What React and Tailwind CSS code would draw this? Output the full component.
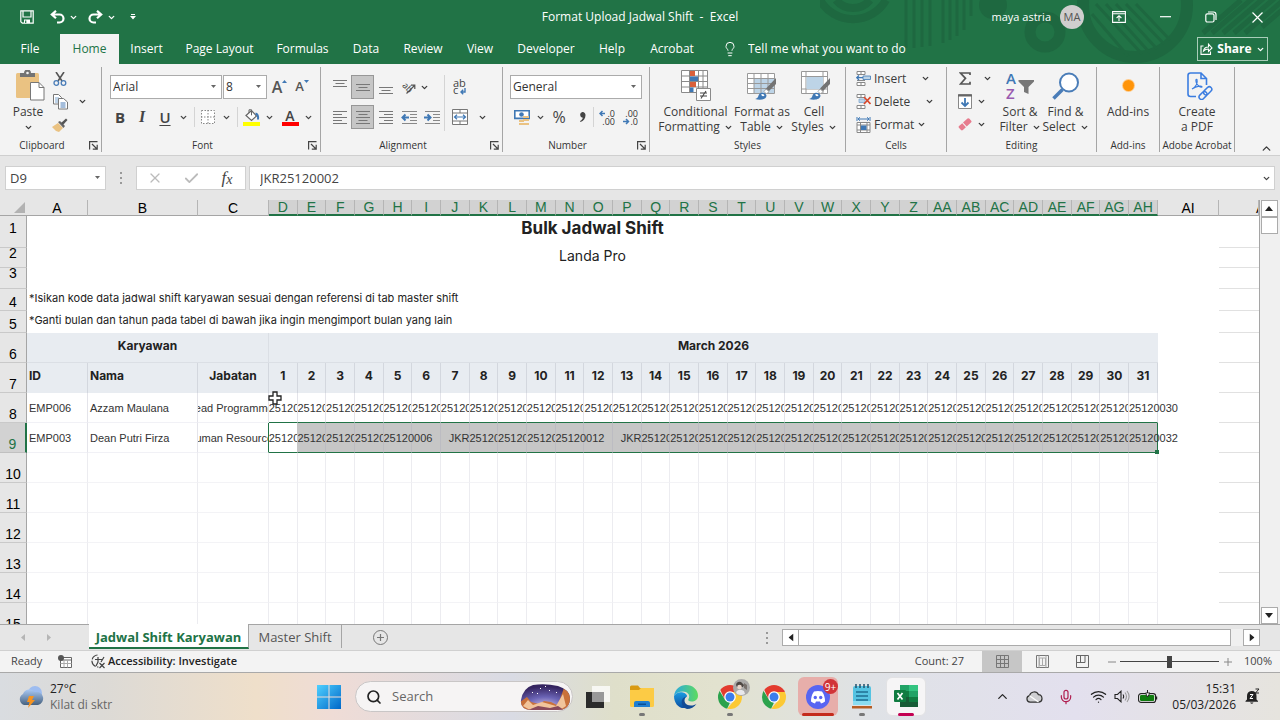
import { ChevronDown, ChevronUp, Lightbulb, Mic, Search, Wifi, X, Check } from "lucide-react";

const TABS = [
  ["File", "w-[60px]"],
  ["Home", "w-[59px]"],
  ["Insert", "w-[55px]"],
  ["Page Layout", "w-[91px]"],
  ["Formulas", "w-[75px]"],
  ["Data", "w-[52px]"],
  ["Review", "w-[62px]"],
  ["View", "w-[52px]"],
  ["Developer", "w-[80px]"],
  ["Help", "w-[52px]"],
  ["Acrobat", "w-[68px]"],
];

const DAYS = Array.from({ length: 31 }, (_, i) => i + 1);

const columnName = (n) =>
  n < 26
    ? String.fromCharCode(65 + n)
    : "A" + String.fromCharCode(65 + n - 26);

const code = (n) => "JKR2512" + String(n).padStart(4, "0");

const EMPLOYEES = [
  {
    row: 8,
    id: "EMP006",
    name: "Azzam Maulana",
    job: "Lead Programmer",
    shifts: DAYS.map((d) => code(d === 1 ? 1 : d - 1)),
  },
  {
    row: 9,
    id: "EMP003",
    name: "Dean Putri Firza",
    job: "Human Resources",
    shifts: DAYS.map((d) => ([6, 7, 12, 13].includes(d) ? "" : code(d + 1))),
  },
];

export default function App() {
  return (
    <div className="flex h-screen w-full flex-col overflow-hidden bg-[#e6e6e6] font-['Open_Sans',sans-serif] text-xs text-[#333]">
      <Header />
      <Ribbon />
      <FormulaBar />
      <Sheet />
      <SheetTabs />
      <StatusBar />
      <Taskbar />
    </div>
  );
}

/* ---------- shared ---------- */

function Chev({ className = "" }) {
  return (
    <ChevronDown
      size={9}
      strokeWidth={3.5}
      className={`shrink-0 ${className}`}
      aria-hidden="true"
    />
  );
}

function IconButton({ label, height = "h-6", className = "", children }) {
  return (
    <button
      type="button"
      aria-label={label}
      className={`${height} flex shrink-0 items-center justify-center ${className}`}
    >
      {children}
    </button>
  );
}

/* ---------- header ---------- */

function Header() {
  return (
    <header className="relative shrink-0 bg-[#217346] text-white">
      <HeaderArt />
      <div className="relative grid h-[34px] grid-cols-[1fr_auto_1fr] items-center">
        <div className="flex items-center pl-[15px]">
          <IconButton label="Save" className="w-6">
            <svg width="14" height="14" viewBox="0 0 14 14" fill="none" stroke="#fff" strokeWidth="1.2">
              <path d="M.8.8h12.4v12.4H2.300L.8 11.700z" />
              <path d="M3 1v6h8V1" />
              <path d="M4 13V9.500h6V13z" fill="#fff" stroke="none" />
              <path d="M5.700 10.500V13" stroke="#217346" />
            </svg>
          </IconButton>
          <IconButton label="Undo" className="ml-1.5 w-6">
            <UndoIcon />
          </IconButton>
          <IconButton label="Undo history" className="w-2">
            <Chev />
          </IconButton>
          <IconButton label="Redo" className="ml-1.5 w-6">
            <UndoIcon className="-scale-x-100" />
          </IconButton>
          <IconButton label="Redo history" className="w-2">
            <Chev />
          </IconButton>
          <IconButton label="Customize toolbar" className="ml-3 w-3">
            <svg width="6" height="6" viewBox="0 0 6 6" fill="#fff">
              <path d="M1 0h4v1H1zM0 2h6L3 5.5z" />
            </svg>
          </IconButton>
        </div>
        <h1 className="whitespace-pre">Format Upload Jadwal Shift  -  Excel</h1>
        <div className="flex items-center justify-end">
          <span className="mr-[9px] text-[11px]">maya astria</span>
          <span className="mr-3 flex size-6 items-center justify-center rounded-full bg-[#d0cece] text-[11px] text-[#555]">
            MA
          </span>
          <IconButton label="Ribbon display options" className="w-[46px]">
            <svg width="14" height="12" viewBox="0 0 14 12" fill="none" stroke="#fff" strokeWidth="1.1">
              <path d="M.6.6h12.8v10.8H.6zM.6 2.8h12.8M7 10V5M4.6 7 7 4.7 9.4 7" />
            </svg>
          </IconButton>
          <IconButton label="Minimize" className="w-[46px]">
            <svg width="11" height="2" viewBox="0 0 11 2">
              <path d="M0 .7h11" stroke="#fff" strokeWidth="1.2" />
            </svg>
          </IconButton>
          <IconButton label="Restore" className="w-[46px]">
            <svg width="12" height="12" viewBox="0 0 12 12" fill="none" stroke="#fff" strokeWidth="1.2">
              <rect x=".8" y="2.8" width="8.2" height="8.2" rx="1.5" />
              <path d="M3 1h5.5A2.6 2.6 0 0 1 11 3.5V9" />
            </svg>
          </IconButton>
          <IconButton label="Close" className="w-[46px]">
            <svg width="11" height="11" viewBox="0 0 11 11">
              <path d="m.5.5 10 10m0-10-10 10" stroke="#fff" strokeWidth="1.2" />
            </svg>
          </IconButton>
        </div>
      </div>
      <nav className="relative flex h-[30px] items-stretch">
        {TABS.map(([name, width]) => (
          <button
            key={name}
            type="button"
            className={`${width} shrink-0 whitespace-nowrap ${
              name === "Home" ? "bg-[#f3f3f3] text-[#217346]" : ""
            }`}
          >
            {name}
          </button>
        ))}
        <label htmlFor="tellme" className="flex w-8 items-center justify-end">
          <Lightbulb size={16} strokeWidth={1.5} aria-label="Tell me" />
        </label>
        <input
          id="tellme"
          className="w-44 bg-transparent pl-2.5 placeholder:text-white placeholder:opacity-100"
          placeholder="Tell me what you want to do"
        />
        <button
          type="button"
          className="mr-3 ml-auto flex h-6 w-[71px] items-center justify-center gap-1 self-center border border-[#a9cdb9] font-bold"
        >
          <svg width="13" height="12" viewBox="0 0 13 12" fill="none" stroke="#fff" strokeWidth="1.1">
            <path d="M3.5 3H1v8.4h9.5V8.5M3.5 8C4 5 6 4 8.5 4V1.2L12 5 8.5 8.5V6C6.500 6 5 6.500 3.500 8z" />
          </svg>
          Share
          <Chev />
        </button>
      </nav>
    </header>
  );
}

function UndoIcon({ className = "" }) {
  return (
    <svg width="15" height="14" viewBox="0 0 15 14" fill="none" stroke="#fff" strokeWidth="2.2" className={className}>
      <path d="M6 .8 1.800 4.500 6 8.300M2 4.500h7.500a4 4 0 0 1 0 8H7" />
    </svg>
  );
}

function HeaderArt() {
  return (
    <svg
      className="absolute top-0 right-0"
      width="460"
      height="64"
      viewBox="820 0 460 64"
      fill="none"
      stroke="#1e6840"
      aria-hidden="true"
    >
      <path d="M820 0a38 38 0 0 0 66 0M836 0a22 22 0 0 0 34 0" strokeWidth="8" />
      <path d="M906 0v48M914 0v48M922 0v47M930 0v46M943 0v43M950 0v40M957 0v36M964 0v30M971 0v16" strokeWidth="3" />
      <circle cx="993" cy="5" r="14" fill="#1e6840" stroke="none" />
      <circle cx="1045" cy="32" r="15" strokeWidth="11" />
      <circle cx="1135" cy="5" r="52" strokeWidth="12" />
      <path d="m1096 4 46 50M1106 4l44 49M1116 4l41 45M1126 4l38 40M1136 4l34 36M1092 14l36 42" strokeWidth="3" />
      <path d="m1203 33 38-33M1212 33l42-36M1223 33l42-36M1234 33l42-36M1245 33l42-36M1262 27l20-17" strokeWidth="5" />
    </svg>
  );
}

/* ---------- ribbon ---------- */

function Group({ title, width, launcher, children }) {
  return (
    <section className={`${width} flex shrink-0 py-[3px]`} aria-label={title}>
      <div className="flex min-w-0 flex-1 flex-col border-r border-[#a5a5a5]">
        <div className="flex h-[73px]">{children}</div>
        <div
          className={`relative flex items-center justify-center text-[10px] leading-[14px] whitespace-nowrap text-[#333] ${
            launcher ? "pr-[17px]" : ""
          }`}
        >
          {title}
          {launcher && (
            <button type="button" aria-label={`${title} settings`} className="absolute top-[3px] right-[3px]">
              <svg width="9" height="9" viewBox="0 0 9 9" fill="none" stroke="#444" strokeWidth="1.2">
                <path d="M.6 8.500V.6H8.500M3 3l4.500 4.500M8.200 3.800v4.400H3.800" />
              </svg>
            </button>
          )}
        </div>
      </div>
    </section>
  );
}

function BigButton({ width, icon, first, second, chevron }) {
  return (
    <button type="button" className={`${width} flex shrink-0 flex-col items-center whitespace-nowrap`}>
      <span className="flex h-[37px] items-center justify-center">{icon}</span>
      <span className="flex h-4 items-center">{first}</span>
      <span className="flex h-[14px] items-center gap-1">
        {second}
        {chevron && <Chev />}
      </span>
    </button>
  );
}

function Divider({ className = "h-5" }) {
  return <span className={`w-px shrink-0 bg-[#d4d4d4] ${className}`} />;
}

function Ribbon() {
  return (
    <div className="relative flex h-[92px] shrink-0 border-b border-[#cfcfcf] bg-[#f3f3f3] text-[#3b3b3b]">
      <Group title="Clipboard" width="w-[102px]" launcher>
        <div className="ml-2">
          <BigButton width="w-10" icon={<PasteIcon />} first="Paste" chevron />
        </div>
        <div className="flex flex-col">
          <IconButton label="Cut" height="h-[23px]" className="w-6">
            <svg width="14" height="14" viewBox="0 0 14 14" fill="none">
              <path d="m3 0 6 9M11 0 5 9" stroke="#555" strokeWidth="1.6" />
              <circle cx="3.300" cy="11" r="2.300" stroke="#4a7db8" strokeWidth="1.300" />
              <circle cx="10.500" cy="11" r="2.300" stroke="#4a7db8" strokeWidth="1.300" />
            </svg>
          </IconButton>
          <div className="flex">
            <IconButton label="Copy" height="h-[23px]" className="w-6">
              <svg width="15" height="16" viewBox="0 0 15 16" fill="#fff" stroke="#777">
                <path d="M.5.5h5l3 3V10h-8z" />
                <path d="M2 4h4M2 6h4M2 8h4" stroke="#7fa7d1" />
                <path d="M5.500 4.500h5l4 3.500v7h-9z" />
                <path d="M7.500 9h5M7.500 11h5M7.500 13h5" stroke="#4a7db8" />
              </svg>
            </IconButton>
            <IconButton label="Copy options" height="h-[23px]" className="w-5">
              <Chev />
            </IconButton>
          </div>
          <IconButton label="Format Painter" height="h-[23px]" className="w-6">
            <svg width="16" height="14" viewBox="0 0 16 14">
              <path d="m0 9 6-4 5 5-4 4-3-1z" fill="#eac282" />
              <path d="m6 4 2-1 5 5-1.500 2z" fill="#666" />
              <path d="m9 5 5-4.500L15.500 2 11 7z" fill="#555" />
            </svg>
          </IconButton>
        </div>
      </Group>

      <Group title="Font" width="w-[219px]" launcher>
        <div className="flex flex-col gap-1.5 pt-2 pl-2">
          <div className="flex items-center">
            <ComboBox label="Font" value="Arial" width="w-28" />
            <span className="w-px" />
            <ComboBox label="Font size" value="8" width="w-11" />
            <IconButton label="Increase font size" className="w-[25px] text-base font-semibold text-[#555]">
              A
              <SizeMark className="-translate-y-1.5" />
            </IconButton>
            <IconButton label="Decrease font size" className="w-5 text-[13px] font-semibold text-[#555]">
              A
              <SizeMark className="-translate-y-1.5 rotate-180" />
            </IconButton>
          </div>
          <div className="flex items-center text-[15px] text-[#444]">
            <IconButton label="Bold" className="w-5 font-bold">B</IconButton>
            <IconButton label="Italic" className="w-6 font-['Liberation_Serif',serif] text-base font-bold italic">I</IconButton>
            <IconButton label="Underline" className="w-[22px] font-semibold underline underline-offset-2">U</IconButton>
            <IconButton label="Underline options" className="w-[14px]"><Chev /></IconButton>
            <span className="w-1" />
            <Divider />
            <IconButton label="Borders" className="w-[26px]">
              <svg width="14" height="14" viewBox="0 0 14 14" stroke="#888" strokeDasharray="1.500 1.500" fill="#fff">
                <path d="M.5.5h13v13H.5zM7 0v14M0 7h14" />
              </svg>
            </IconButton>
            <IconButton label="Border options" className="w-[10px]"><Chev /></IconButton>
            <span className="w-1.5" />
            <Divider />
            <IconButton label="Fill color" className="w-[27px]">
              <svg width="17" height="17" viewBox="0 0 17 17" fill="none">
                <path d="M3 6.500 8.500 1.500l5 5.500-5 4.500z" fill="#fff" stroke="#666" strokeWidth="1.200" />
                <path d="M6 4V.800h2.500v5.500" stroke="#666" />
                <path d="M12.500 4.500c2 .5 3 2 2.500 6" stroke="#3f78b5" strokeWidth="2" />
                <path d="M0 13h17v4H0z" fill="#ff0" />
              </svg>
            </IconButton>
            <IconButton label="Fill options" className="w-[8px]"><Chev /></IconButton>
            <IconButton label="Font color" className="ml-1 w-[26px] flex-col">
              <span className="h-[13px] text-[14px] leading-[13px] font-semibold">A</span>
              <span className="h-1 w-[17px] bg-[#f00]" />
            </IconButton>
            <IconButton label="Font color options" className="w-[10px]"><Chev /></IconButton>
          </div>
        </div>
      </Group>

      <Group title="Alignment" width="w-[182px]" launcher>
        <div className="flex pt-2 pl-[7px]">
          <div className="flex w-[116px] flex-col gap-1.5">
            <div className="flex items-center">
              <IconButton label="Top align" className="w-[23px]"><Lines rows={[[0, 14], [3, 9], [6, 14]]} /></IconButton>
              <IconButton label="Middle align" className="w-[23px] border border-[#979797] bg-[#c6c6c6]"><Lines rows={[[4, 14], [7, 9], [10, 14]]} /></IconButton>
              <IconButton label="Bottom align" className="w-[23px]"><Lines rows={[[7, 14], [10, 9], [13, 14]]} /></IconButton>
              <IconButton label="Orientation" className="w-[23px]">
                <svg width="14" height="14" viewBox="0 0 14 14" stroke="#555" fill="none">
                  <path d="m4.500 13.500 8-8M12.800 9V5.200H9" strokeWidth="1.200" />
                  <text x="1" y="9" fontSize="9" fill="#444" stroke="none" transform="rotate(45 4 6)">ab</text>
                </svg>
              </IconButton>
              <IconButton label="Orientation options" className="w-2"><Chev /></IconButton>
            </div>
            <div className="flex items-center">
              <IconButton label="Align left" className="w-[23px]"><Lines align="left" /></IconButton>
              <IconButton label="Center" className="w-[23px] border border-[#979797] bg-[#c6c6c6]"><Lines /></IconButton>
              <IconButton label="Align right" className="w-[23px]"><Lines align="right" /></IconButton>
              <IconButton label="Decrease indent" className="w-[23px]"><IndentIcon /></IconButton>
              <IconButton label="Increase indent" className="w-[23px]"><IndentIcon right /></IconButton>
            </div>
          </div>
          <Divider className="h-14" />
          <div className="flex flex-col gap-1.5 pl-[3px]">
            <IconButton label="Wrap text" className="w-6">
              <svg width="14" height="17" viewBox="0 0 14 17" fill="#444" fontSize="11">
                <text x="0" y="8">ab</text>
                <text x="0" y="15">c</text>
                <path d="M12 9v4H8m2.200-2.200L8 13l2.200 2.200" fill="none" stroke="#3f78b5" strokeWidth="1.400" />
              </svg>
            </IconButton>
            <div className="flex">
              <IconButton label="Merge and center" className="w-6">
                <svg width="16" height="16" viewBox="0 0 16 16" fill="#fff" stroke="#777">
                  <path d="M.5.5h15v15H.5zM.5 4h15M.5 12h15M8 .5V4M8 12v3.500" />
                  <path d="M2.500 8h11M5 5.800 2.500 8 5 10.200M11 5.800 13.500 8 11 10.200" stroke="#3f78b5" fill="none" strokeWidth="1.200" />
                </svg>
              </IconButton>
              <IconButton label="Merge options" className="w-5"><Chev /></IconButton>
            </div>
          </div>
        </div>
      </Group>

      <Group title="Number" width="w-[147px]" launcher>
        <div className="flex flex-col gap-1.5 pt-2 pl-[7px]">
          <ComboBox label="Number format" value="General" width="w-[132px]" />
          <div className="flex items-center text-[#444]">
            <IconButton label="Accounting format" className="w-6">
              <svg width="16" height="15" viewBox="0 0 16 15">
                <path d="M.7.7h14.600v7.600H.7z" fill="#fff" stroke="#3f78b5" strokeWidth="1.800" />
                <circle cx="7.500" cy="4.500" r="2.300" fill="#3f78b5" />
                <path d="M9 6h6v2H9zM9 9h6v2H9zM5 10h5v2H5zM5 13h10v2H5z" fill="#eac282" />
              </svg>
            </IconButton>
            <IconButton label="Accounting options" className="w-3"><Chev /></IconButton>
            <IconButton label="Percent" className="w-[26px] text-base">%</IconButton>
            <IconButton label="Comma style" className="w-[21px]">
              <svg width="7" height="10" viewBox="0 0 7 10" fill="#444">
                <path d="M3.300 0a3 3 0 0 1 3.200 3.300C6.500 6.500 4.500 9 1.500 10L1 9c1.700-.8 2.600-1.900 2.800-3.300A2.900 2.900 0 0 1 3.300 0z" />
              </svg>
            </IconButton>
            <Divider />
            <IconButton label="Increase decimal" className="w-[26px]">
              <DecimalIcon top=".0" bottom=".00" />
            </IconButton>
            <IconButton label="Decrease decimal" className="w-[20px]">
              <DecimalIcon top=".00" bottom=".0" right />
            </IconButton>
          </div>
        </div>
      </Group>

      <Group title="Styles" width="w-[196px]">
        <div className="flex pl-2">
          <BigButton width="w-[75px]" icon={<ConditionalIcon />} first="Conditional" second="Formatting" chevron />
          <BigButton width="w-[58px]" icon={<TableIcon />} first="Format as" second="Table" chevron />
          <BigButton width="w-[46px]" icon={<CellStyleIcon />} first="Cell" second="Styles" chevron />
        </div>
      </Group>

      <Group title="Cells" width="w-[101px]">
        <div className="flex flex-col pl-2.5">
          {[
            ["Insert", <InsertCellsIcon key="i" />, "ml-3"],
            ["Delete", <DeleteCellsIcon key="d" />, "ml-3"],
            ["Format", <FormatCellsIcon key="f" />, ""],
          ].map(([name, icon, gap]) => (
            <button key={name} type="button" className="flex h-[23px] items-center gap-[3px]">
              {icon}
              {name}
              <Chev className={gap} />
            </button>
          ))}
        </div>
      </Group>

      <Group title="Editing" width="w-[150px]">
        <div className="flex w-[49px] flex-col pl-1.5">
          <div className="flex h-[23px] items-center">
            <IconButton label="AutoSum" className="w-6">
              <svg width="12" height="13" viewBox="0 0 12 13" fill="none" stroke="#555" strokeWidth="1.700">
                <path d="M11 3V1H1.500l5 5.300-5 5.700H11v-2.300" />
              </svg>
            </IconButton>
            <IconButton label="AutoSum options" className="w-5"><Chev /></IconButton>
          </div>
          <div className="flex h-[23px] items-center">
            <IconButton label="Fill" className="w-6">
              <svg width="14" height="15" viewBox="0 0 14 15" fill="#fff" stroke="#888">
                <path d="M.5.5h13v14H.5z" />
                <path d="M0 1.500h14" stroke="#666" strokeWidth="2" />
                <path d="M7 4v8M3.500 8.500 7 12l3.500-3.500" fill="none" stroke="#3f78b5" strokeWidth="1.800" />
              </svg>
            </IconButton>
            <IconButton label="Fill options" className="w-2"><Chev /></IconButton>
          </div>
          <div className="flex h-[23px] items-center">
            <IconButton label="Clear" className="w-6">
              <svg width="14" height="13" viewBox="0 0 14 13" fill="#e77c8e">
                <path d="m5 4.500 4.500-4q1-.8 2 .2l1.700 2q.8 1-.2 1.800L8.700 8.500zM4.300 5.200l3.600 4-3 2.800q-1 .9-1.900 0L.9 9.700Q.200 8.700 1 8z" />
              </svg>
            </IconButton>
            <IconButton label="Clear options" className="w-2"><Chev /></IconButton>
          </div>
        </div>
        <BigButton width="w-[48px]" icon={<SortIcon />} first="Sort &amp;" second="Filter" chevron />
        <BigButton
          width="w-[43px]"
          icon={
            <svg width="28" height="28" viewBox="0 0 28 28" fill="#fff" stroke="#4a7db8">
              <circle cx="17" cy="10.500" r="9" strokeWidth="2" />
              <path d="m10.500 17.500-9 9" strokeWidth="3.500" />
            </svg>
          }
          first="Find &amp;"
          second="Select"
          chevron
        />
      </Group>

      <Group title="Add-ins" width="w-[63px]">
        <BigButton
          width="w-[62px]"
          icon={<span className="size-[11px] rounded-full bg-[#ff9409] ring-1 ring-[#ffc987]" />}
          first="Add-ins"
        />
      </Group>

      <Group title="Adobe Acrobat" width="w-[75px]">
        <BigButton width="w-[74px]" icon={<PdfIcon />} first="Create" second="a PDF" />
      </Group>

      <button type="button" aria-label="Collapse ribbon" className="mr-[7px] ml-auto self-end">
        <ChevronUp size={13} strokeWidth={2.5} />
      </button>
    </div>
  );
}

function ComboBox({ label, value, width }) {
  return (
    <div className={`${width} relative h-6 shrink-0`}>
      <select
        aria-label={label}
        className="h-full w-full appearance-none border border-[#ababab] bg-white pl-0.5 text-xs text-[#333]"
      >
        <option>{value}</option>
      </select>
      <Caret className="pointer-events-none absolute top-2.5 right-1.5" />
    </div>
  );
}

function Caret({ className = "" }) {
  return (
    <svg width="5" height="3" viewBox="0 0 5 3" className={className} fill="#666">
      <path d="M0 0h5L2.500 3z" />
    </svg>
  );
}

function SizeMark({ className }) {
  return (
    <svg width="5" height="3" viewBox="0 0 5 3" className={className} fill="#3f78b5">
      <path d="M0 3h5L2.500 0z" />
    </svg>
  );
}

function Lines({ align = "center", rows = [[1, 14], [4, 9], [7, 14], [10, 9], [13, 14]] }) {
  return (
    <svg width="14" height="15" viewBox="0 0 14 15" fill="#777">
      {rows.map(([y, w]) => (
        <rect
          key={y}
          x={align === "left" ? 0 : align === "right" ? 14 - w : (14 - w) / 2}
          y={y}
          width={w}
          height="1"
        />
      ))}
    </svg>
  );
}

function IndentIcon({ right }) {
  return (
    <svg width="16" height="15" viewBox="0 0 16 15" fill="none">
      <path d="M1 1.500h15M9 4.500h7M9 7.500h7M9 10.500h7M1 13.500h15" stroke="#888" />
      {right ? (
        <path d="M0 7.500h6M3.500 4.500l3 3-3 3" stroke="#3f78b5" strokeWidth="2" />
      ) : (
        <path d="M8 7.500H2M4.500 4.500l-3 3 3 3" stroke="#3f78b5" strokeWidth="2" />
      )}
    </svg>
  );
}

function DecimalIcon({ top, bottom, right }) {
  return (
    <svg width="16" height="17" viewBox="0 0 16 17" fontSize="9" fill="#333">
      <text x="16" y="8" textAnchor="end">{top}</text>
      <text x="16" y="16" textAnchor="end">{bottom}</text>
      {right ? (
        <path d="M1 12.500h5M4 10l2.500 2.500L4 15" fill="none" stroke="#3f78b5" strokeWidth="1.500" />
      ) : (
        <path d="M6 4.500H1M3.500 2 1 4.500 3.500 7" fill="none" stroke="#3f78b5" strokeWidth="1.500" />
      )}
    </svg>
  );
}

function PasteIcon() {
  return (
    <svg width="29" height="31" viewBox="0 0 29 31" className="ml-1">
      <rect x="0" y="3" width="23" height="25" rx="1.500" fill="#eac282" />
      <path d="M4 3h4a3.500 3.500 0 0 1 7 0h4v4H4z" fill="#737373" />
      <circle cx="11.500" cy="3" r="1.300" fill="#f3f3f3" />
      <path d="M14.500 12.500h8.500l5 5v12.500H14.500z" fill="#fff" stroke="#777" />
      <path d="M23 12.500v5h5" fill="none" stroke="#777" />
    </svg>
  );
}

function ConditionalIcon() {
  return (
    <svg width="30" height="31" viewBox="0 0 30 31">
      <path d="M.5.5h26v22H.5z" fill="#fff" />
      <path d="M.5.500h26v22H.5zM.5 6h26M.5 11.500h26M.5 17h26M8.500.5v22M17.500.5v22M22 .5v22" fill="none" stroke="#8a8a8a" />
      <path d="M9 1h5v5H9zM9 12h6v5H9z" fill="#d9603b" />
      <path d="M9 6.500h8V11H9zM9 17.500h3.500V22H9z" fill="#3f78b5" />
      <path d="M15.500 18.500h14v12h-14z" fill="#fff" stroke="#8a8a8a" />
      <path d="M19 23h7M19 26h7M25 21l-5 7.500" stroke="#444" strokeWidth="1.100" />
    </svg>
  );
}

function Brush() {
  return (
    <>
      <path d="M29 7v6l-7 7-3-2.500z" fill="#737373" />
      <path d="m19 18 3 2.500-2.500 2.500-2.500-2.500z" fill="#fff" stroke="#888" strokeWidth=".7" />
      <path d="M8 28c3-.5 3-2.500 4-4.500 2-3 7-2 7.500 1 0 4-6 5-11.500 3.500z" fill="#3f78b5" />
      <path d="M14 23.500q2.500-1.500 3.500 1-2 2-3.500-1z" fill="#fff" />
    </>
  );
}

function TableIcon() {
  return (
    <svg width="30" height="30" viewBox="0 0 30 30">
      <path d="M.5 2.500h27v20H.5z" fill="#fff" />
      <path d="M7 8h20v14H7z" fill="#bdd4e7" />
      <path d="M.5 2.500h27v20H.5zM.5 7.500h27M.5 12.500h27M.5 17.500h27M7 2.500v20M14 2.500v20M21 2.500v20" fill="none" stroke="#999" />
      <Brush />
    </svg>
  );
}

function CellStyleIcon() {
  return (
    <svg width="30" height="30" viewBox="0 0 30 30" className="ml-1">
      <path d="M.5.5h26v22H.5zM.5 5.500h26M5 .5v22M22 .5v22M.5 18h26" fill="#fff" stroke="#999" />
      <path d="M5.500 6H22v12H5.500z" fill="#bdd4e7" />
      <Brush />
    </svg>
  );
}

function InsertCellsIcon() {
  return (
    <svg width="15" height="15" viewBox="0 0 15 15" fill="#fff" stroke="#888">
      <path d="M1 .5h8v3H1zM5 .5v3M1 11.500h8v3H1zM5 11.500v3M1 9.500h8" />
      <path d="M7 5h7.500v3.500H7z" fill="#bdd4e7" stroke="#3f78b5" strokeWidth=".8" />
      <path d="M7 6.700H1M3 4.500.8 6.700 3 9" fill="none" stroke="#3f78b5" strokeWidth="1.300" />
    </svg>
  );
}

function DeleteCellsIcon() {
  return (
    <svg width="15" height="15" viewBox="0 0 15 15" fill="#fff" stroke="#888">
      <path d="M1 .5h8v3H1zM5 .5v3M1 11.500h8v3H1zM5 11.500v3" />
      <path d="M3 5h6v3.500H3z" fill="#bdd4e7" stroke="#7fa7d1" strokeWidth=".8" />
      <path d="m8 3 6.500 7M14.500 3 8 10" fill="none" stroke="#d9482b" strokeWidth="1.700" />
    </svg>
  );
}

function FormatCellsIcon() {
  return (
    <svg width="15" height="16" viewBox="0 0 15 16" fill="#fff" stroke="#888">
      <path d="M1 5.500h13v10H1zM1 8h13M1 13h13M4.500 5.500v10M11 5.500v10" />
      <path d="M5 8.500h5.500v4.500H5z" fill="#3f78b5" stroke="none" />
      <path d="M2 2h11M4 .300 2 2l2 1.700M11 .300 13 2l-2 1.700M1 0v4M14 0v4" fill="none" stroke="#3f78b5" />
    </svg>
  );
}

function SortIcon() {
  return (
    <svg width="28" height="28" viewBox="0 0 28 28" fontSize="15" fontWeight="600">
      <text x="0" y="12" fill="#3f78b5">A</text>
      <text x="0" y="27" fill="#9a5bb0">Z</text>
      <path d="M12.500 8h15.500v1.500L22.500 15v7l-4.500-2v-5l-5.500-5.500z" fill="#777" />
    </svg>
  );
}

function PdfIcon() {
  return (
    <svg width="26" height="28" viewBox="0 0 26 28" fill="none" stroke="#3b7de0" strokeWidth="1.600" className="ml-1.5">
      <path d="M9 24.500H3.500Q1 24.500 1 22V3.500Q1 1 3.500 1H14l5.500 5.500V13M14 1v5.500h5.500" />
      <path d="M5 17c4-2 6-6 5-9.500-1.500-1-1.500 2 0 4.500s3.500 3.500 5 3c.5-1.500-5-1.500-10 2z" strokeWidth="1.100" />
      <rect x="16" y="16.500" width="9.500" height="5" rx="2.500" transform="rotate(-45 20.500 19)" strokeWidth="1.500" />
      <rect x="11.500" y="21" width="9" height="5" rx="2.500" transform="rotate(-45 16 23.500)" strokeWidth="1.500" />
    </svg>
  );
}

/* ---------- formula bar ---------- */

function FormulaBar() {
  return (
    <div className="flex h-11 shrink-0 items-center px-[5px] text-[13px] text-[#444]">
      <div className="relative h-6 w-[101px] shrink-0">
        <input aria-label="Name box" defaultValue="D9" className="h-full w-full border border-[#d0d0d0] bg-white pl-1" />
        <Caret className="absolute top-2.5 right-1.5" />
      </div>
      <Dots className="mx-3.5" />
      <div className="flex h-6 w-[110px] shrink-0 items-center border border-[#d0d0d0] bg-white">
        <IconButton label="Cancel" className="w-9"><X size={16} strokeWidth={1.8} color="#bbb" /></IconButton>
        <IconButton label="Enter" className="w-9"><Check size={17} strokeWidth={2.5} color="#bbb" /></IconButton>
        <IconButton label="Insert function" className="w-9 font-['Liberation_Serif',serif] text-[17px] italic">
          f<span className="pt-1 text-sm">x</span>
        </IconButton>
      </div>
      <div className="relative ml-[3px] h-6 min-w-0 flex-1">
        <input aria-label="Formula" defaultValue="JKR25120002" className="h-full w-full border border-[#d0d0d0] bg-white pl-2.5" />
        <Chev className="absolute top-2 right-1" />
      </div>
    </div>
  );
}

function Dots({ className = "" }) {
  return (
    <svg width="2" height="12" viewBox="0 0 2 12" fill="#999" className={`shrink-0 ${className}`}>
      <path d="M0 0h2v2H0zM0 5h2v2H0zM0 10h2v2H0z" />
    </svg>
  );
}

/* ---------- sheet ---------- */

function RowHead({ n, place = "align-bottom leading-4", selected }) {
  return (
    <th
      scope="row"
      className={`${place} border-r border-b p-0 font-['Liberation_Sans',sans-serif] text-sm font-normal ${
        selected
          ? "border-r-2 border-r-[#217346] border-b-[#c0c0c0] bg-[#d2d2d2] text-[#217346]"
          : "border-r-[#a5a5a5] border-b-[#c9c9c9] bg-[#e6e6e6] text-black"
      }`}
    >
      {n}
    </th>
  );
}

function OuterCells() {
  return (
    <>
      <td />
      <td className="border-b border-[#e1e1e1]" />
    </>
  );
}

// text spills over a neighbour only where that neighbour is empty
function spill(shifts, i) {
  if (i === shifts.length - 1 || !shifts[i + 1]) return "[clip-path:inset(0_-50px_0_0)]";
  if (i > 0 && !shifts[i - 1]) return "[clip-path:inset(0_0_0_-50px)]";
  return "overflow-hidden";
}

function EmployeeRow({ row, id, name, job, shifts }) {
  const selected = row === 9;
  const edge = "border-r border-b border-r-[#e4e4ea] border-b-[#f1f1f6] p-0 pt-0.5";
  return (
    <tr className="h-[30px] font-['Liberation_Sans',sans-serif] text-[11px] whitespace-nowrap text-[#333]">
      <RowHead n={row} selected={selected} />
      <td className={`${edge} pl-0.5`}>{id}</td>
      <td className={`${edge} pl-0.5`}>{name}</td>
      <td className={`border-r border-b border-b-[#f1f1f6] p-0 pt-0.5 ${selected ? "border-r-[#217346]" : "border-r-[#e4e4ea]"}`}>
        <div className="flex justify-center overflow-hidden">{job}</div>
      </td>
      {shifts.map((shift, i) => (
        <td
          key={i}
          className={`border-r border-b border-b-[#217346] p-0 pt-0.5 ${i === 0 || i === 30 ? "relative" : ""} ${
            !selected
              ? "border-r-[#e4e4ea]"
              : i === 30
                ? "border-r-[#217346] bg-[#c6c6c6]"
                : i === 0
                  ? "border-r-[#c6c6c6]"
                  : "border-r-[#bcbcc2] bg-[#c6c6c6]"
          }`}
        >
          {shift && <div className={`flex justify-center ${spill(shifts, i)}`}>{shift}</div>}
          {selected && i === 30 && (
            <span className="absolute -right-0.5 -bottom-0.5 size-1 bg-[#217346]" />
          )}
          {!selected && i === 0 && <CrossCursor />}
        </td>
      ))}
      <OuterCells />
    </tr>
  );
}

function CrossCursor() {
  return (
    <svg width="14" height="14" viewBox="0 0 14 14" className="absolute -top-0.5 -left-px z-10">
      <path d="M5 1h4v4h4v4H9v4H5V9H1V5h4z" fill="#fff" stroke="#222" strokeWidth="1.300" />
    </svg>
  );
}

function Sheet() {
  const heading = "font-['Inter',sans-serif] font-bold text-[#222]";
  return (
    <main className="flex min-h-0 flex-1 overflow-hidden">
      <div className="min-w-0 flex-1 overflow-hidden border-r border-[#a5a5a5] bg-white">
        <table className="w-full table-fixed border-separate border-spacing-0">
          <colgroup>
            <col className="w-[27px]" />
            <col className="w-[61px]" />
            <col className="w-[110px]" />
            <col className="w-[71px]" />
            {DAYS.map((d) => (
              <col key={d} />
            ))}
            <col className="w-[61px]" />
            <col className="w-[40px]" />
          </colgroup>
          <thead>
            <tr className="h-4 font-['Liberation_Sans',sans-serif] text-[14px] leading-[14px] text-black">
              <th className="border-b border-[#a5a5a5] bg-[#e6e6e6] p-0" aria-label="Select all">
                <svg width="11" height="11" viewBox="0 0 11 11" className="ml-auto mr-0.5" fill="#b2b2b2">
                  <path d="M11 0v11H0z" />
                </svg>
              </th>
              {Array.from({ length: 36 }, (_, i) => {
                const selected = i > 2 && i < 34;
                return (
                  <th
                    key={i}
                    scope="col"
                    className={`overflow-hidden border-r p-0 font-normal whitespace-nowrap ${
                      selected
                        ? "border-r-[#b5b5b5] border-b-2 border-b-[#217346] bg-[#d2d2d2] text-[#217346]"
                        : "border-b border-r-[#b5b5b5] border-b-[#a5a5a5] bg-[#e6e6e6]"
                    } ${i === 35 ? "pl-[37px]" : ""}`}
                  >
                    {columnName(i)}
                  </th>
                );
              })}
            </tr>
          </thead>
          <tbody>
            <tr className="h-8">
              <RowHead n={1} place="align-top leading-[24px]" />
              <td colSpan={34} className={`${heading} p-0 pb-2 text-center text-[17px] leading-5`}>
                Bulk Jadwal Shift
              </td>
              <OuterCells />
            </tr>
            <tr className="h-5">
              <RowHead n={2} place="align-top leading-[10px]" />
              <td colSpan={34} className="p-0 text-center align-top font-['Inter',sans-serif] text-sm leading-4 text-[#222]">
                Landa Pro
              </td>
              <OuterCells />
            </tr>
            <tr className="h-[21px]">
              <RowHead n={3} place="align-top leading-[10px]" />
              <td colSpan={34} />
              <OuterCells />
            </tr>
            {[
              [4, "*Isikan kode data jadwal shift karyawan sesuai dengan referensi di tab master shift"],
              [5, "*Ganti bulan dan tahun pada tabel di bawah jika ingin mengimport bulan yang lain"],
            ].map(([n, note]) => (
              <tr key={n} className="h-[22px]">
                <RowHead n={n} />
                <td colSpan={34} className="p-0 pb-1 pl-0.5 font-['Inter',sans-serif] text-[11px] leading-4 text-[#222]">
                  {note}
                </td>
                <OuterCells />
              </tr>
            ))}
            <tr className={`${heading} h-[30px] text-center text-xs`}>
              <RowHead n={6} />
              <td colSpan={3} className="border-r border-b border-[#dbdfe5] bg-[#e8ecf1] p-0 pb-1">
                Karyawan
              </td>
              <td colSpan={31} className="border-b border-[#dbdfe5] bg-[#e8ecf1] p-0 pb-1">
                March 2026
              </td>
              <OuterCells />
            </tr>
            <tr className={`${heading} h-[30px] text-xs`}>
              <RowHead n={7} />
              {["ID", "Nama", "Jabatan", ...DAYS].map((label, i) => (
                <td
                  key={label}
                  className={`border-r border-[#d3d7de] bg-[#e8ecf1] p-0 pb-1 ${
                    i < 2 ? "pl-0.5" : "text-center"
                  }`}
                >
                  {label}
                </td>
              ))}
              <OuterCells />
            </tr>
            {EMPLOYEES.map((e) => (
              <EmployeeRow key={e.id} {...e} />
            ))}
            {[10, 11, 12, 13, 14, 15].map((n) => (
              <tr key={n} className="h-[30px]">
                <RowHead n={n} />
                {Array.from({ length: 34 }, (_, i) => (
                  <td key={i} className="border-r border-b border-r-[#ececf0] border-b-[#f3f3f6]" />
                ))}
                <OuterCells />
              </tr>
            ))}
          </tbody>
        </table>
      </div>
      <div className="flex w-5 shrink-0 flex-col items-center bg-[#f0f0f0] pr-0.5">
        <ScrollButton label="Scroll up" className="" />
        <span className="h-[17px] w-[17px] border border-[#ababab] bg-white" />
        <span className="flex-1" />
        <ScrollButton label="Scroll down" className="rotate-180" />
      </div>
    </main>
  );
}

function ScrollButton({ label, className }) {
  return (
    <button
      type="button"
      aria-label={label}
      className="flex size-[17px] shrink-0 items-center justify-center border border-[#ababab] bg-white"
    >
      <svg width="8" height="5" viewBox="0 0 8 5" className={className}>
        <path d="M0 5h8L4 0z" fill="#222" />
      </svg>
    </button>
  );
}

/* ---------- sheet tabs and status bar ---------- */

function SheetTabs() {
  return (
    <div className="flex h-[26px] shrink-0 items-start border-t border-[#a5a5a5] text-[13px]">
      <div className="flex h-6 w-[89px] items-center gap-[22px] pl-[21px]">
        <button type="button" aria-label="Previous sheet">
          <svg width="4" height="7" viewBox="0 0 4 7" fill="#b5b5b5"><path d="M4 0v7L0 3.500z" /></svg>
        </button>
        <button type="button" aria-label="Next sheet">
          <svg width="4" height="7" viewBox="0 0 4 7" fill="#b5b5b5"><path d="M0 0v7l4-3.500z" /></svg>
        </button>
      </div>
      <button
        type="button"
        className="-mt-px h-[25px] w-40 border-r border-b-2 border-r-[#a5a5a5] border-b-[#217346] bg-white pt-1 font-bold whitespace-nowrap text-[#217346]"
      >
        Jadwal Shift Karyawan
      </button>
      <button type="button" className="h-[23px] w-[93px] border-r border-[#a5a5a5] pt-0.5 text-[#555]">
        Master Shift
      </button>
      <button type="button" aria-label="New sheet" className="mt-[5px] ml-[31px]">
        <svg width="15" height="15" viewBox="0 0 15 15" fill="none" stroke="#777">
          <circle cx="7.500" cy="7.500" r="7" />
          <path d="M7.500 4v7M4 7.500h7" strokeWidth="1.200" />
        </svg>
      </button>
      <div className="mt-1 mr-5 ml-auto flex w-[494px] items-center">
        <Dots className="mr-3.5" />
        <ScrollButton label="Scroll left" className="-rotate-90" />
        <span className="h-[17px] w-[432px] border border-l-0 border-[#ababab] bg-white" />
        <span className="h-[17px] flex-1 bg-[#f0f0f0]" />
        <ScrollButton label="Scroll right" className="rotate-90" />
      </div>
    </div>
  );
}

function StatusBar() {
  return (
    <footer className="flex h-[22px] shrink-0 items-center border-t border-[#d0d0d0] bg-[#f3f3f3] text-[11px] text-[#444]">
      <span className="w-[58px] pl-[11px]">Ready</span>
      <IconButton label="Macro recording" className="mr-[19px] w-[14px]">
        <svg width="14" height="13" viewBox="0 0 14 13" fill="#fff" stroke="#666">
          <path d="M2.500 2.500h11v10h-11zM2.500 5h11" />
          <path d="M6 5v7.500M9.500 5v7.500M2.500 8.500h11" stroke="#aaa" />
          <circle cx="3" cy="3" r="3" fill="#555" stroke="none" />
        </svg>
      </IconButton>
      <button type="button" className="flex items-center gap-0.5 font-semibold text-[#222]">
        <svg width="15" height="15" viewBox="0 0 15 15" fill="none" stroke="#444" strokeWidth="1.200">
          <path d="M6.500 1a6 6 0 0 0 1 12" strokeDasharray="7 1.500" />
          <path d="M4 5.500h7M7 3v5l-2 4M13 3l-3 5M8.500 9l5 5M13.500 9l-5 5" />
        </svg>
        Accessibility: Investigate
      </button>
      <span className="mr-[18px] ml-auto">Count: 27</span>
      <IconButton label="Normal view" height="h-full" className="w-10 bg-[#c6c6c6]">
        <svg width="13" height="13" viewBox="0 0 13 13" fill="none" stroke="#777">
          <path d="M.5.500h12v12H.5zM4.500.5v12M8.500.5v12M.5 4.500h12M.5 8.500h12" />
        </svg>
      </IconButton>
      <IconButton label="Page layout view" className="w-10">
        <svg width="13" height="13" viewBox="0 0 13 13" fill="none" stroke="#777">
          <path d="M.5.500h12v12H.5z" />
          <path d="M3.500 3v7.500h6V3zM6.500 3v7.500M3 .5v12M10 .5v12" stroke="#aaa" />
        </svg>
      </IconButton>
      <IconButton label="Page break view" className="w-10">
        <svg width="13" height="13" viewBox="0 0 13 13" fill="none" stroke="#666">
          <path d="M.5.500h12v12H.5zM.5 7.500H9V.5M4.500.5v7" />
        </svg>
      </IconButton>
      <button type="button" aria-label="Zoom out" className="mr-1 ml-1.5 text-[#888]">
        <svg width="8" height="8" viewBox="0 0 8 8" stroke="currentColor"><path d="M0 4h8" /></svg>
      </button>
      <input
        type="range"
        aria-label="Zoom"
        defaultValue={50}
        className="h-3 w-[99px] appearance-none bg-[linear-gradient(#444,#444)] bg-[length:100%_1px] bg-center bg-no-repeat [&::-webkit-slider-thumb]:h-3 [&::-webkit-slider-thumb]:w-[5px] [&::-webkit-slider-thumb]:appearance-none [&::-webkit-slider-thumb]:bg-[#444]"
      />
      <button type="button" aria-label="Zoom in" className="mr-3 ml-[5px] text-[#888]">
        <svg width="8" height="8" viewBox="0 0 8 8" stroke="currentColor"><path d="M0 4h8M4 0v8" /></svg>
      </button>
      <span className="mr-2">100%</span>
    </footer>
  );
}

/* ---------- taskbar ---------- */

function Taskbar() {
  return (
    <div className="flex h-12 shrink-0 items-center border-t border-[#a9a9a9] bg-[linear-gradient(90deg,#d9dce0_0%,#dcdad6_8%,#efdfca_20%,#efdcd6_26%,#d9dbe4_40%,#dfdfca_48%,#e2e2cf_56%,#dfe2e6_68%,#e3e0ee_84%,#e6e4de_100%)]">
      <div className="flex w-[307px] items-center gap-1.5 pl-[18px] leading-4">
        <svg width="26" height="24" viewBox="0 0 26 24" aria-hidden="true">
          <defs>
            <linearGradient id="cloud" x1="0" y1="0" x2="0" y2="1">
              <stop offset="0" stopColor="#a9c9f5" />
              <stop offset="1" stopColor="#47627f" />
            </linearGradient>
          </defs>
          <circle cx="17" cy="8" r="7" fill="#9dbcf0" />
          <path d="M6 20a6 6 0 0 1-1-11 7 7 0 0 1 12-2 6.500 6.500 0 0 1 3 13z" fill="url(#cloud)" />
          <path d="M11 11h5l-2 4h3l-7 8 1.500-6H9z" fill="#f79421" />
        </svg>
        <div>
          <div className="text-[#222]">27°C</div>
          <div className="text-[#666]">Kilat di sktr</div>
        </div>
      </div>
      <IconButton label="Start" className="w-11">
        <svg width="24" height="24" viewBox="0 0 24 24">
          <defs>
            <linearGradient id="win" x1="0" y1="0" x2="1" y2="1">
              <stop offset="0" stopColor="#4fd0ff" />
              <stop offset="1" stopColor="#0067c8" />
            </linearGradient>
          </defs>
          <path d="M0 0h11.500v11.500H0zM12.500 0H24v11.500H12.500zM0 12.500h11.500V24H0zM12.500 12.500H24V24H12.500z" fill="url(#win)" />
        </svg>
      </IconButton>
      <label
        htmlFor="search"
        className="ml-1 flex h-[31px] w-[218px] shrink-0 items-center rounded-full border border-[#c9c6c6] bg-[#f6f4f4] pr-0.5 pl-2.5"
      >
        <Search size={16} strokeWidth={2.5} color="#222" />
        <input
          id="search"
          placeholder="Search"
          className="min-w-0 flex-1 bg-transparent pl-2.5 text-[13px] placeholder:text-[#666] placeholder:opacity-100"
        />
        <SearchArt />
      </label>
      <div className="ml-[3px] flex h-full items-center">
        <AppButton label="Task view">
          <svg width="24" height="24" viewBox="0 0 24 24">
            <path d="M0 7h18v16H0z" fill="#2b2b2b" />
            <path d="M6 1h18v16H6z" fill="#fff" opacity=".75" />
            <path d="M6 7h12v10H6z" fill="#999" />
          </svg>
        </AppButton>
        <AppButton label="File Explorer" open>
          <svg width="24" height="23" viewBox="0 0 24 23">
            <path d="M0 2q0-1.500 1.500-1.500H8L10 3h14v4H0z" fill="#d99a12" />
            <path d="M0 5h9l2-2h13v17.500q0 1.500-1.500 1.500h-21Q0 22 0 20.500z" fill="#fccb45" />
            <path d="M4 22v-4q0-2 2-2h12q2 0 2 2v4z" fill="#1f7fd1" />
            <path d="M8 18.500h8v1.500H8z" fill="#0b4f94" />
          </svg>
        </AppButton>
        <AppButton label="Edge"><EdgeIcon /></AppButton>
        <AppButton label="Chrome, Maya" open>
          <ChromeIcon id="c1" />
          <svg width="17" height="17" viewBox="0 0 17 17" className="absolute top-1.5 right-0.5">
            <circle cx="8.500" cy="8.500" r="8.500" fill="#aaa9a8" />
            <path d="M3 6q1-4 5-3l3 3-1 2H4z" fill="#4d4744" />
            <circle cx="6.500" cy="8" r="2.300" fill="#e8d6cc" />
            <path d="M3 13q3-4 8-1l1 3q-4 2-8 0z" fill="#e9e9ec" />
            <path d="m11 4 3 2v5l-3-2z" fill="#77706c" />
          </svg>
        </AppButton>
        <AppButton label="Chrome"><ChromeIcon id="c2" /></AppButton>
        <AppButton label="Discord" tone="bg-[#e7aeaa]" bar="w-8 bg-[#c42b1c]">
          <svg width="24" height="24" viewBox="0 0 24 24">
            <circle cx="12" cy="12" r="12" fill="#5865f2" />
            <path d="M8 6.500q4-1 8 0 3 4 3 10-2 1.500-4 2l-1-2h-4l-1 2q-2-.5-4-2 0-6 3-10z" fill="#fff" />
            <circle cx="9.300" cy="12.500" r="1.700" fill="#5865f2" />
            <circle cx="14.700" cy="12.500" r="1.700" fill="#5865f2" />
          </svg>
          <span className="absolute top-1.5 right-0.5 flex size-[15px] items-center justify-center rounded-full bg-[#d13438] text-[10px] leading-none text-white">
            9+
          </span>
        </AppButton>
        <AppButton label="Notepad" open>
          <svg width="20" height="25" viewBox="0 0 20 25">
            <path d="M1 4q0-2 2-2h14q2 0 2 2v17H1z" fill="#55c3e2" />
            <path d="M1 17h18v4H1z" fill="#8bdcf0" />
            <path d="M4 0v4M8 0v4M12 0v4M16 0v4" stroke="#22506b" strokeWidth="1.500" />
            <path d="M4 8h12M4 12h12M4 16h12" stroke="#1f6f93" strokeWidth="1.500" />
            <path d="M0 22h20v2.500H0z" fill="#b65d24" />
          </svg>
        </AppButton>
        <AppButton label="Excel" tone="bg-[#f6f5f6] border border-[#e2e2e4]" bar="w-4 bg-[#c30052]">
          <svg width="24" height="23" viewBox="0 0 24 23">
            <path d="M6 0h9v6H6z" fill="#21a366" />
            <path d="M15 0h9v6h-9z" fill="#33c481" />
            <path d="M6 6h9v6H6z" fill="#107c41" />
            <path d="M15 6h9v6h-9z" fill="#21a366" />
            <path d="M6 12h18v10H6z" fill="#185c37" />
            <path d="M15 12h9v5h-9z" fill="#107c41" />
            <rect y="5" width="12" height="12" rx="1" fill="#107c41" />
            <path d="m3.500 8 5 6.500M8.500 8l-5 6.500" stroke="#fff" strokeWidth="1.700" />
          </svg>
        </AppButton>
      </div>
      <div className="ml-auto flex items-center">
        <IconButton label="Show hidden icons" className="w-8">
          <ChevronUp size={15} strokeWidth={2} color="#222" />
        </IconButton>
        <IconButton label="OneDrive" className="w-8">
          <svg width="17" height="12" viewBox="0 0 17 12" fill="#cfcfd2" stroke="#333" strokeWidth="1.200">
            <path d="M4 11.200a3.300 3.300 0 0 1-.5-6.500 4.800 4.800 0 0 1 9-1 3.800 3.800 0 0 1 .5 7.500z" />
            <path d="m3.500 4.700 9 6.300" stroke="#fff" />
          </svg>
        </IconButton>
        <IconButton label="Microphone" className="w-8"><Mic size={16} strokeWidth={1.800} color="#b01e50" /></IconButton>
        <IconButton label="Network" className="w-8"><Wifi size={17} strokeWidth={1.800} color="#222" /></IconButton>
        <IconButton label="Volume" className="w-4">
          <svg width="16" height="13" viewBox="0 0 16 13" fill="none" stroke="#222" strokeWidth="1.100">
            <path d="M1 4.500h2.500L7 1.200v10.600L3.500 8.500H1zM9 4.500q1.300 2 0 4" />
            <path d="M11 2.500q3 4 0 8M13 1q4.200 5.500 0 11" stroke="#999" />
          </svg>
        </IconButton>
        <IconButton label="Battery" className="w-9">
          <svg width="20" height="13" viewBox="0 0 20 13">
            <rect x=".6" y="3.600" width="17" height="8.800" rx="2.500" fill="#fff" stroke="#222" strokeWidth="1.200" />
            <rect x="2" y="5" width="14.200" height="6" rx="1.200" fill="#107c10" />
            <path d="M18.500 6.500v3" stroke="#222" strokeWidth="1.400" />
            <path d="M9.500 0v3H7.500l2 4 2.500-4H10" fill="#fff" stroke="#222" />
          </svg>
        </IconButton>
        <div className="w-[70px] text-right leading-4 text-[#222]">
          <div>15:31</div>
          <div>05/03/2026</div>
        </div>
        <IconButton label="Notifications" className="mr-5 ml-2 w-4">
          <svg width="15" height="17" viewBox="0 0 15 17" fill="#222">
            <path d="M6.500 3a5 5 0 0 0-4.500 5v3.500L.5 13v.8h12.500V13l-1.500-1.500V8q0-5-5-5zM5 14.500h3.500q-1.700 2.500-3.500 0z" />
            <path d="M5 6.500h3L5 10.500h3" stroke="#fff" fill="none" />
            <path d="M10.500 1h3.500l-3.500 4H14" stroke="#222" fill="none" />
          </svg>
        </IconButton>
      </div>
    </div>
  );
}

function AppButton({ label, tone = "", bar, open, children }) {
  return (
    <button type="button" aria-label={label} className="relative flex h-full w-11 items-center justify-center">
      <span className={`absolute inset-x-0.5 inset-y-1 rounded-md ${tone}`} />
      <span className="relative">{children?.length ? children[0] : children}</span>
      {children?.length ? children[1] : null}
      {(bar || open) && (
        <span className={`absolute bottom-1 h-[3px] rounded-full ${bar || "w-1.5 bg-[#777]"}`} />
      )}
    </button>
  );
}

function SearchArt() {
  return (
    <svg width="50" height="26" viewBox="0 0 50 26" aria-hidden="true">
      <defs>
        <radialGradient id="night" cx=".5" cy=".9" r=".8">
          <stop offset="0" stopColor="#d9c9ea" />
          <stop offset=".5" stopColor="#6a63b5" />
          <stop offset="1" stopColor="#352460" />
        </radialGradient>
        <clipPath id="blob">
          <path d="M13 1Q25-1 38 2q12 4 12 12 0 12-12 12H12Q0 26 1 16 3 4 13 1z" />
        </clipPath>
      </defs>
      <g clipPath="url(#blob)">
        <path d="M0 0h50v26H0z" fill="url(#night)" />
        <path d="m0 18 7-5 4 5 8 2 5-3 7 1 6 3 3-6 4-11 5 4 4 8v11H0z" fill="#c9713a" />
        <path d="m3 22 5-6 5 5 9-3 7 2 7 2 7-12 3 12-6 4H10z" fill="#f1c49b" />
        <path d="M8 26l10-4 12 2 8-2 6 4z" fill="#8a4a5a" />
        <path d="M12 8h1v1h-1zM20 4h1v1h-1zM29 6h1v1h-1zM36 8h1v1h-1zM17 9h1v1h-1zM25 2h1v1h-1z" fill="#fff" />
      </g>
    </svg>
  );
}

function ChromeIcon({ id }) {
  return (
    <svg width="24" height="24" viewBox="0 0 24 24">
      <clipPath id={id}>
        <circle cx="12" cy="12" r="12" />
      </clipPath>
      <g clipPath={`url(#${id})`}>
        <path d="M0 0h24v7H12L7 15z" fill="#e33b2e" />
        <path d="M0 3.500 7.200 15l4.800 2.500L9 24H0z" fill="#2ba24c" />
        <path d="M12 7h12v17H9l7.500-9z" fill="#fcc934" />
      </g>
      <circle cx="12" cy="12" r="5.800" fill="#fff" />
      <circle cx="12" cy="12" r="4.500" fill="#3b7ded" />
    </svg>
  );
}

function EdgeIcon() {
  return (
    <svg width="24" height="24" viewBox="0 0 24 24">
      <defs>
        <linearGradient id="edgeTop" x1="0" y1="0" x2="1" y2="0">
          <stop offset="0" stopColor="#2aa9e0" />
          <stop offset="1" stopColor="#5ddb5f" />
        </linearGradient>
        <linearGradient id="edgeSide" x1="0" y1="0" x2="0" y2="1">
          <stop offset="0" stopColor="#1b9de2" />
          <stop offset="1" stopColor="#0b4ea2" />
        </linearGradient>
      </defs>
      <path d="M0 11C1 4 6 0 12 0c7 0 12 5 12 10.500 0 4-3 6-6.500 6-2.500 0-4-1-3-2.500C17 10 13 6.500 9 6.500c-4 0-7.500 2-9 4.500z" fill="url(#edgeTop)" />
      <path d="M0 11c2-3.500 6-4.500 9-3.500 3 .8 4.500 3 4 4-4 2-4 8 1.500 11q-1.200.5-3 .5C5 24 0 18.500 0 11z" fill="url(#edgeSide)" />
      <path d="M12 11.500c-3.500 4-1 9 5 9 2.500 0 4-.8 5.500-1.800C20.500 22 16.500 24 13 24c-7-2-7-11-1-12.500z" fill="#124b95" />
    </svg>
  );
}
